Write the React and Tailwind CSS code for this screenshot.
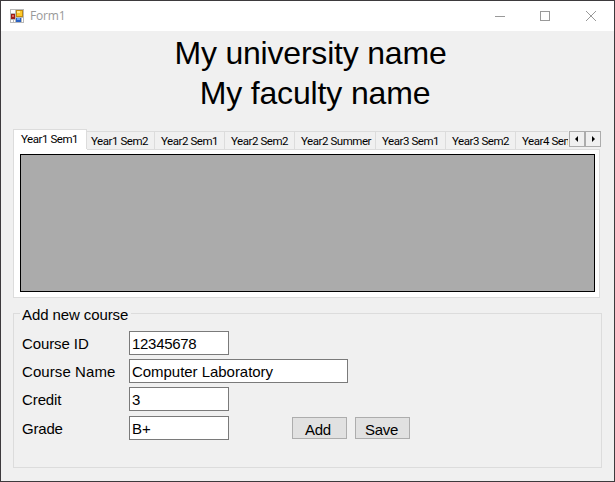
const TABS = [
  { label: 'Year1 Sem2', size: 'w-[68px] pl-1' },
  { label: 'Year2 Sem1', size: 'w-[70px] pl-[6px]' },
  { label: 'Year2 Sem2', size: 'w-[70px] pl-[6px]' },
  { label: 'Year2 Summer', size: 'w-[81px] pl-[6px]' },
  { label: 'Year3 Sem1', size: 'w-[70px] pl-[6px]' },
  { label: 'Year3 Sem2', size: 'w-[70px] pl-[6px]' },
  { label: 'Year4 Sem1', size: 'w-[70px] pl-[6px]' },
];

function AppIcon() {
  return (
    <svg width="14" height="14" viewBox="0 0 14 14" shapeRendering="crispEdges">
      <rect width="14" height="14" fill="#b9b9b9" />
      <rect x="1" y="1" width="4" height="3" fill="#fff" />
      <rect x="1" y="11" width="4" height="2" fill="#fff" />
      <rect x="12" y="9" width="1" height="4" fill="#fff" />
      <rect x="3" y="11" width="1" height="2" fill="#b9b9b9" />
      <rect x="1" y="5" width="4" height="5" fill="#9d1c17" />
      <rect x="2" y="6" width="2" height="2" fill="#e3655a" />
      <rect x="6" y="1" width="7" height="7" fill="#c08a12" />
      <rect x="7" y="2" width="5" height="5" fill="#ffc928" />
      <rect x="7" y="2" width="3" height="2" fill="#ffe789" />
      <rect x="6" y="9" width="5" height="4" fill="#2a62c4" />
      <rect x="7" y="9" width="3" height="2" fill="#72a7f5" />
    </svg>
  );
}

function TitleBar() {
  return (
    <header className="flex h-[30px] shrink-0 items-center bg-white pl-2">
      <div className="ml-px"><AppIcon /></div>
      <span className="ml-[6px] font-['Open_Sans',sans-serif] text-[12px] leading-[16px] tracking-[-0.2px] text-[#999]">Form1</span>
      <svg className="ml-auto mr-[17px]" width="103" height="12" viewBox="0 0 103 12" fill="none" stroke="#999">
        <path d="M1 6.5h10" />
        <rect x="46.5" y="1.5" width="9" height="9" />
        <path d="M92 1l10 10M102 1L92 11" />
      </svg>
    </header>
  );
}

function ScrollButton({ d }) {
  return (
    <button className="flex h-4 w-4 items-center justify-center border border-[#acacac] bg-[#f0f0f0]">
      <svg width="6" height="7" viewBox="0 0 6 7"><path d={d} fill="#000" /></svg>
    </button>
  );
}

function Tabs() {
  return (
    <section className="ml-3 mt-4 w-[588px]">
      <div className="flex h-5 items-end font-[Roboto,sans-serif] text-[11.5px] leading-[14px] tracking-[-0.45px] text-black">
        <div className="flex h-5 w-[555px] items-end overflow-hidden whitespace-nowrap">
          <div className="h-5 w-[74px] shrink-0 border border-b-0 border-[#dcdcdc] bg-white pl-[7px] pt-[2px]">Year1 Sem1</div>
          {TABS.map((t) => (
            <div key={t.label} className={`${t.size} h-[18px] shrink-0 border-r border-t border-[#dcdcdc] pt-[2px]`}>{t.label}</div>
          ))}
        </div>
        <div className="mb-[2px] ml-px flex">
          <ScrollButton d="M4 0v6L1 3z" />
          <ScrollButton d="M2 0v6L5 3z" />
        </div>
      </div>
      <div className="h-[149px] w-[587px] border border-t-0 border-[#dcdcdc] bg-white">
        <div className="ml-[73px] h-px bg-[#dcdcdc]" />
        <div className="ml-[6px] mt-[4px] h-[138px] w-[575px] border border-black bg-[#ababab]" />
      </div>
    </section>
  );
}

function Field({ label, value, width, gap, labelTracking, valueTracking, children }) {
  return (
    <div className={`flex h-6 ${gap}`}>
      <label className={`w-[107px] shrink-0 pt-1 leading-[17px] ${labelTracking}`}>{label}</label>
      <div className={`${width} h-6 whitespace-nowrap border border-[#7a7a7a] bg-white pl-[2px] pt-[3px] leading-[17px] ${valueTracking}`}>{value}</div>
      {children}
    </div>
  );
}

function CourseForm() {
  return (
    <section className="ml-3 mt-[7px] w-[589px] text-[15px] text-black">
      <div className="flex h-[17px] items-start leading-[17px]">
        <div className="mt-2 h-[9px] w-[7px] border-l border-t border-[#dcdcdc]" />
        <h2 className="mt-px w-[111px] whitespace-nowrap pl-[2px] tracking-[-0.1px]">Add new course</h2>
        <div className="mt-2 h-[9px] grow border-r border-t border-[#dcdcdc]" />
      </div>
      <div className="h-[146px] border border-t-0 border-[#dcdcdc] pl-2 pt-[9px]">
        <Field label="Course ID" value="12345678" width="w-[100px]" gap="" labelTracking="tracking-[-0.1px]" valueTracking="tracking-[-0.3px]" />
        <Field label="Course Name" value="Computer Laboratory" width="w-[219px]" gap="mt-1" labelTracking="tracking-[0.08px]" valueTracking="tracking-[-0.04px]" />
        <Field label="Credit" value="3" width="w-[100px]" gap="mt-1" labelTracking="tracking-[-0.1px]" valueTracking="" />
        <Field label="Grade" value="B+" width="w-[100px]" gap="mt-[5px]" labelTracking="tracking-[-0.2px]" valueTracking="">
          <button className="ml-[63px] mt-px h-[22px] w-[55px] border border-[#adadad] bg-[#e1e1e1] pr-[3px] pt-[3px] leading-[17px] tracking-[-0.3px]">Add</button>
          <button className="ml-2 mt-px h-[22px] w-[55px] border border-[#adadad] bg-[#e1e1e1] pr-[2px] pt-[3px] leading-[17px] tracking-[-0.3px]">Save</button>
        </Field>
      </div>
    </section>
  );
}

export default function App() {
  return (
    <main className="flex h-[482px] w-[615px] flex-col overflow-hidden border border-[#3d3a3d] bg-[#f0f0f0] font-['Liberation_Sans',Arial,sans-serif]">
      <TitleBar />
      <div className="mt-[2px] text-center text-[32px] leading-[40px] text-black">
        <h1 className="pl-[6px] tracking-[-0.2px]">My university name</h1>
        <h1 className="pl-[15px] tracking-[-0.15px]">My faculty name</h1>
      </div>
      <Tabs />
      <CourseForm />
    </main>
  );
}
